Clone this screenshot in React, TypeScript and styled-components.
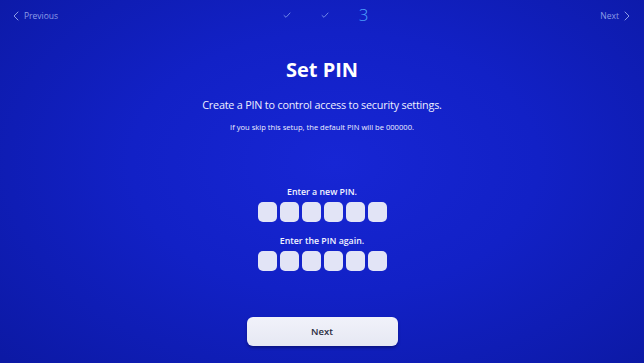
import React from "react";
import styled, { createGlobalStyle } from "styled-components";

const GlobalStyle = createGlobalStyle`
    html, body {
        margin: 0;
        padding: 0;
        overflow: hidden;
    }
    body {
        font-family: "Open Sans", "Noto Sans", sans-serif;
    }
`

const Screen = styled.div`
    width: 100vw;
    height: 100vh;
    display: flex;
    flex-direction: column;
    align-items: center;
    background: radial-gradient(ellipse 70% 80% at 52% 45%, #1726d4 0%, #1221c6 45%, #0c19a4 100%);
    color: #ffffff;
`
const TopBar = styled.div`
    width: 100%;
    height: 30px;
    display: grid;
    grid-template-columns: 1fr auto 1fr;
    align-items: center;
    box-sizing: border-box;
    padding: 0 14px 0 13px;
`
const NavLink = styled.div<{ $right?: boolean }>`
    display: flex;
    align-items: center;
    gap: 5px;
    justify-self: ${props => props.$right ? "end" : "start"};
    font-size: 8.5px;
    color: #8d9ce6;
    margin-top: 1px;
`
const Steps = styled.div`
    display: flex;
    align-items: center;
    gap: 30px;
    margin-left: 8px;
`
const Check = styled.svg`
    width: 8px;
    height: 8px;
`
const StepNumber = styled.span`
    font-size: 17px;
    font-weight: 300;
    color: #4fa6ff;
    line-height: 1;
    margin-top: -2px;
`
const Title = styled.h1`
    margin: 28px 0 0;
    font-size: 20px;
    line-height: 24px;
    font-weight: 700;
`
const Subtitle = styled.p`
    margin: 15px 0 0;
    font-size: 10.8px;
    letter-spacing: -0.2px;
    line-height: 16px;
    color: #eef0ff;
`
const Note = styled.p`
    margin: 9px 0 0;
    font-size: 7.6px;
    line-height: 11px;
    color: #eef0ff;
`
const Label = styled.p<{ $first?: boolean }>`
    margin: ${props => props.$first ? "53px" : "13px"} 0 0;
    font-size: 8.8px;
    line-height: 12px;
    font-weight: 600;
    color: #f2f3ff;
`
const PinRow = styled.div`
    margin-top: 4px;
    display: flex;
    gap: 3px;
    margin-left: 1px;
`
const PinBox = styled.div`
    width: 19px;
    height: 20px;
    border-radius: 5px;
    background: #e2e4f6;
`
const Button = styled.button`
    margin-top: 46px;
    width: 151px;
    height: 29px;
    border: none;
    border-radius: 6px;
    background: linear-gradient(#f1f2fa, #e6e8f3);
    box-shadow: 0 2px 3px rgba(0, 0, 30, 0.35);
    font-family: inherit;
    font-size: 9.5px;
    font-weight: 600;
    color: #2a2c40;
`

const CheckIcon = () => (
    <Check viewBox="0 0 8 8">
        <path d="M1 4.5 L3 6.3 L7 2" fill="none" stroke="#6f86e8" strokeWidth="1" strokeLinecap="round" strokeLinejoin="round" />
    </Check>
)

const Chevron = ({ right }: { right?: boolean }) => (
    <svg width="6" height="10" viewBox="0 0 6 10">
        <path d={right ? "M1 1 L5 5 L1 9" : "M5 1 L1 5 L5 9"} fill="none" stroke="#8d9ce6" strokeWidth="1" strokeLinecap="round" strokeLinejoin="round" />
    </svg>
)

const PinInput = () => (
    <PinRow>
        {Array.from({ length: 6 }).map((_, i) => <PinBox key={i} />)}
    </PinRow>
)

export default function App() {
    return (
        <>
            <GlobalStyle />
            <Screen>
                <TopBar>
                    <NavLink><Chevron />Previous</NavLink>
                    <Steps>
                        <CheckIcon />
                        <CheckIcon />
                        <StepNumber>3</StepNumber>
                    </Steps>
                    <NavLink $right>Next<Chevron right /></NavLink>
                </TopBar>
                <Title>Set PIN</Title>
                <Subtitle>Create a PIN to control access to security settings.</Subtitle>
                <Note>If you skip this setup, the default PIN will be 000000.</Note>
                <Label $first>Enter a new PIN.</Label>
                <PinInput />
                <Label>Enter the PIN again.</Label>
                <PinInput />
                <Button>Next</Button>
            </Screen>
        </>
    )
}
